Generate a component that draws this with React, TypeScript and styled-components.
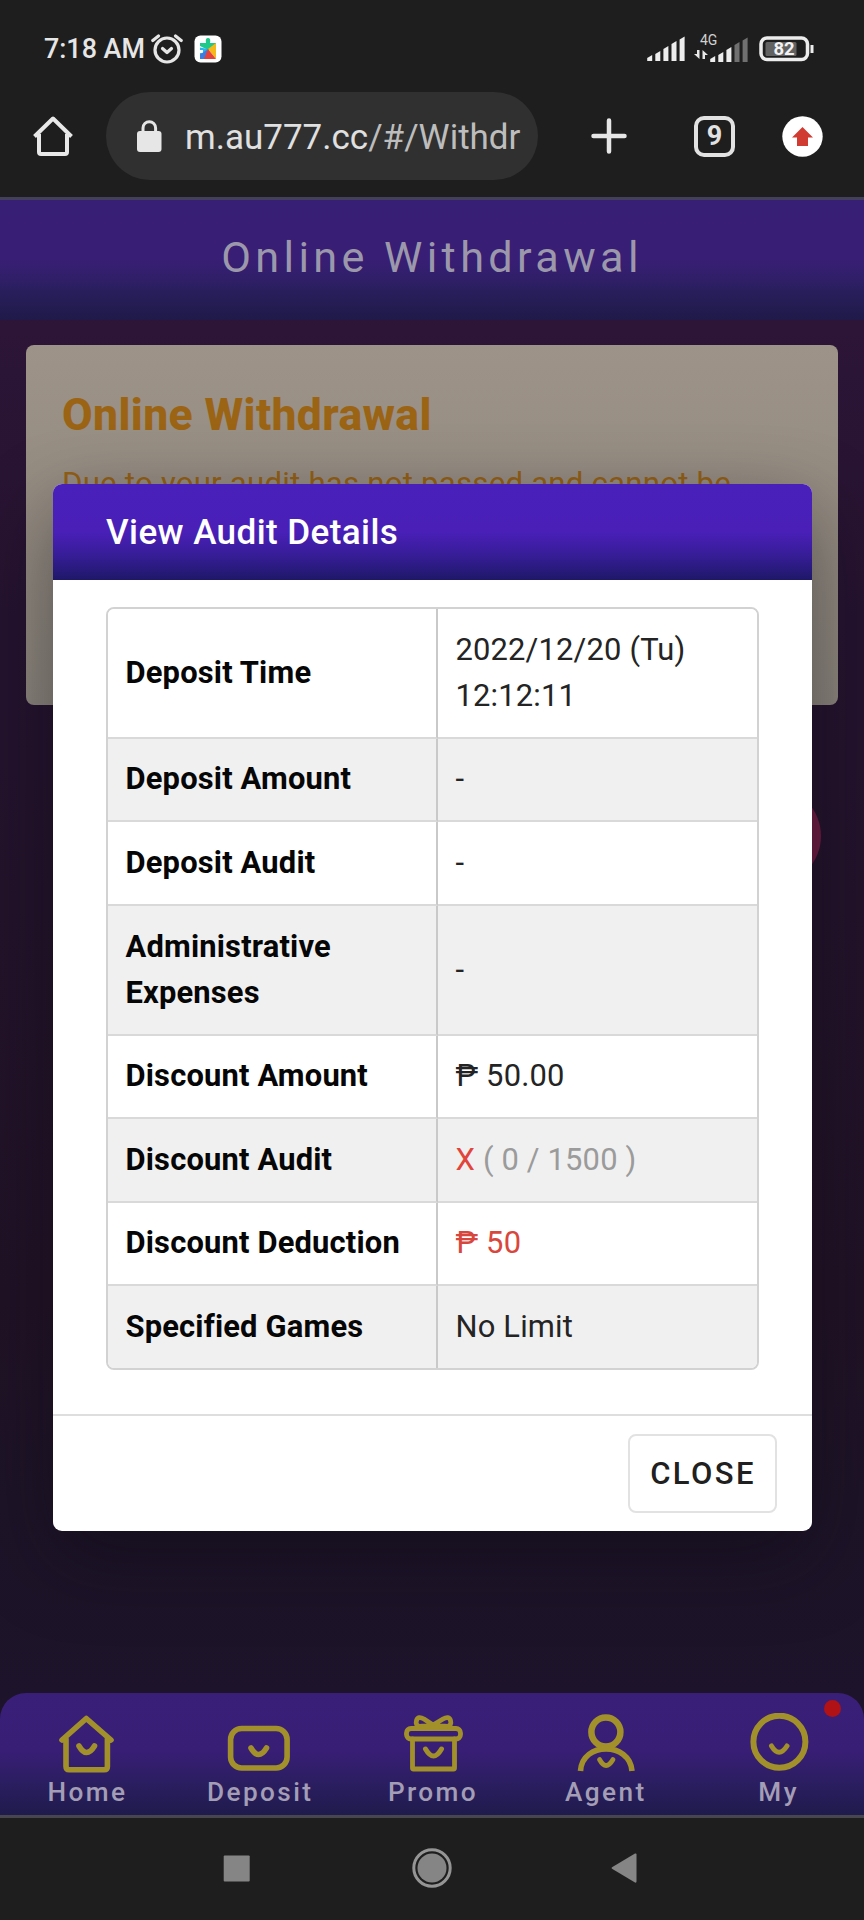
import React from "react";
import styled, { createGlobalStyle } from "styled-components";

const Global = createGlobalStyle`
  *, *::before, *::after { box-sizing: border-box; }
  html, body { margin: 0; padding: 0; background: #1e1e1e; }
  body { font-family: Roboto, "Liberation Sans", sans-serif; overflow: hidden; }
`;

const Phone = styled.div`
  position: relative;
  width: 864px;
  height: 1920px;
  display: flex;
  flex-direction: column;
  background: #1e1e1e;
  overflow: hidden;
`;

const StatusBar = styled.div`
  height: 92px;
  padding: 5px 49px 0 44px;
  display: flex;
  align-items: center;
  justify-content: space-between;
  color: #e6e6e6;
`;

const StatusGroup = styled.div<{ $gap: number }>`
  display: flex;
  align-items: center;
  gap: ${(p) => p.$gap}px;
`;

const Clock = styled.span`
  width: 100px;
  padding-top: 1px;
  font-size: 26.9px;
  line-height: 32px;
  font-weight: 500;
  white-space: nowrap;
`;

const BrowserBar = styled.div`
  height: 105px;
  padding: 0 41px 0 33px;
  display: flex;
  align-items: flex-start;
`;

const BrowserIcon = styled.div<{ $width: number; $left?: number }>`
  flex: none;
  width: ${(p) => p.$width}px;
  height: 88px;
  margin-left: ${(p) => p.$left ?? 0}px;
  display: flex;
  align-items: center;
  justify-content: center;
`;

const AddressPill = styled.div`
  flex: none;
  width: 432px;
  height: 88px;
  margin-left: 33px;
  padding: 0 12px 0 31px;
  border-radius: 44px;
  background: #303030;
  display: flex;
  align-items: center;
  gap: 23px;
`;

const Url = styled.span`
  flex: 1;
  padding-top: 3px;
  font-size: 35px;
  line-height: 48px;
  white-space: nowrap;
  color: #e0e0e0;
`;

const UrlPath = styled.span`
  color: #bdbdbd;
`;

const TabCount = styled.div`
  width: 41px;
  height: 41px;
  border: 4.5px solid #e2e2e2;
  border-radius: 10px;
  display: flex;
  align-items: center;
  justify-content: center;
  font-size: 27px;
  line-height: 30px;
  font-weight: 700;
  color: #e2e2e2;
`;

const Page = styled.main`
  height: 1621px;
  display: flex;
  flex-direction: column;
  border-top: 3px solid #43405a;
  border-bottom: 3px solid #47464e;
  background: linear-gradient(180deg, #2e163a 0, #2c1537 130px, #25132f 420px, #23132b 700px, #211226 1100px, #1e1428 1300px, #1d132a 1496px);
`;

const PageHeader = styled.header`
  height: 120px;
  display: flex;
  align-items: center;
  justify-content: center;
  padding-bottom: 4px;
  background: linear-gradient(180deg, #381f76 0%, #381e74 50%, #301f68 66%, #281e5a 78%, #1f1a49 100%);
  font-size: 43.2px;
  line-height: 52px;
  letter-spacing: 4.4px;
  color: #9c98ab;
`;

const NoticeCard = styled.section`
  height: 360px;
  margin: 25px 26px 0;
  padding: 41px 36px 0;
  border-radius: 8px;
  background: linear-gradient(180deg, #9d9389 0%, #958c82 40%, #8b857c 100%);
`;

const NoticeTitle = styled.h2`
  margin: 0;
  font-size: 44.4px;
  line-height: 59px;
  font-weight: 800;
  letter-spacing: 0.4px;
  color: #9b6414;
`;

const NoticeText = styled.p`
  margin: 16px 0 0;
  font-size: 31.2px;
  line-height: 46px;
  letter-spacing: 0.22px;
  white-space: nowrap;
  color: #936016;
`;

const SubmitPill = styled.div`
  height: 98px;
  margin: 82px 43px 0 432px;
  border-radius: 49px;
  background: #6e1b42;
`;

const TabBar = styled.nav`
  position: relative;
  height: 122px;
  margin-top: auto;
  padding-top: 20px;
  display: grid;
  grid-template-columns: repeat(5, 1fr);
  border-radius: 26px 26px 0 0;
  background: linear-gradient(180deg, #391f77 0%, #381e75 48%, #2c1e62 72%, #1f1b4c 100%);
`;

const Tab = styled.div`
  display: flex;
  flex-direction: column;
  align-items: center;
  font-size: 26.2px;
  line-height: 32px;
  font-weight: 500;
  letter-spacing: 2.4px;
  color: #a39db6;
`;

const TabLabel = styled.span`
  margin-top: 3px;
  margin-right: -2px;
`;

const TabIcon = styled.svg`
  width: 64px;
  height: 60px;
  fill: none;
  stroke: #a2912b;
  stroke-width: 5.6;
  stroke-linecap: round;
  stroke-linejoin: round;
`;

const AlertDot = styled.i`
  position: absolute;
  top: 7px;
  right: 23px;
  width: 17px;
  height: 17px;
  border-radius: 50%;
  background: #b01215;
`;

const SystemNav = styled.div`
  flex: 1;
  padding: 0 0 2px 223px;
  display: flex;
  align-items: center;
`;

const SystemGlyph = styled.svg<{ $left?: number }>`
  margin-left: ${(p) => p.$left ?? 0}px;
  fill: #858585;
`;

const DialogLayer = styled.div`
  position: absolute;
  top: 484px;
  left: 53px;
  width: 759px;
  height: 1047px;
  border-radius: 9px;
  box-shadow: 0 28px 80px rgba(12, 12, 18, 0.45);
`;

const Dialog = styled.section`
  height: 100%;
  display: flex;
  flex-direction: column;
  border-radius: 9px;
  overflow: hidden;
  background: #fff;
`;

const DialogHeader = styled.header`
  height: 96px;
  padding: 0 53px;
  display: flex;
  align-items: center;
  background: linear-gradient(180deg, #4a20bb 0%, #491fb8 50%, #371d97 74%, #1e1868 100%);
  font-size: 35.1px;
  line-height: 44px;
  font-weight: 500;
  letter-spacing: 0.4px;
  color: #fff;
`;

const DialogBody = styled.div`
  flex: 1;
  padding: 27px 53px 0;
`;

const AuditTable = styled.dl`
  width: 653px;
  height: 763px;
  margin: 0;
  display: grid;
  grid-template-columns: 330px 1fr;
  grid-template-rows: 130px 83px 84px 130px 83px 84px 83px 1fr;
  border: 2px solid #d2d2d2;
  border-radius: 8px;
  overflow: hidden;
  font-size: 30.9px;
  line-height: 46px;
  letter-spacing: 0.17px;
`;

const Cell = styled.dd<{ $shaded: boolean; $last: boolean; $tone?: string }>`
  margin: 0;
  padding: 0 17.5px 1px;
  display: flex;
  align-items: center;
  border-bottom: ${(p) => (p.$last ? "none" : "2px solid #d9d9d9")};
  background: ${(p) => (p.$shaded ? "#f0f0f0" : "#fff")};
  color: ${(p) => p.$tone ?? "#242424"};
`;

const LabelCell = styled(Cell).attrs({ as: "dt" })`
  border-right: 2px solid #c9c9c9;
  font-weight: 700;
  color: #060606;
`;

const Muted = styled.span`
  color: #9b9b9b;
`;

const DialogFooter = styled.footer`
  height: 117px;
  padding: 18px 35px 0;
  display: flex;
  justify-content: flex-end;
  border-top: 2px solid #dedede;
`;

const CloseButton = styled.button`
  width: 149px;
  height: 79px;
  padding: 1px 0 0 1px;
  border: 2px solid #e2e2e2;
  border-radius: 8px;
  background: #fff;
  font: 500 31px/40px Roboto, "Liberation Sans", sans-serif;
  letter-spacing: 2.4px;
  color: #202020;
`;

const rows: { label: string; value: React.ReactNode; tone?: string }[] = [
  { label: "Deposit Time", value: <>2022/12/20 (Tu)<br />12:12:11</> },
  { label: "Deposit Amount", value: "-" },
  { label: "Deposit Audit", value: "-" },
  { label: "Administrative Expenses", value: "-" },
  { label: "Discount Amount", value: "₱ 50.00" },
  { label: "Discount Audit", value: <span>X <Muted>( 0 / 1500 )</Muted></span>, tone: "#e0443a" },
  { label: "Discount Deduction", value: "₱ 50", tone: "#d8473d" },
  { label: "Specified Games", value: "No Limit" },
];

const tabs = [
  {
    label: "Home",
    art: <><path d="M8 27 32.3 5.5 57 27M12 26v27.5q0 3.2 3.2 3.2h35q3.2 0 3.2-3.2V26" /><path d="M25 33q7.500 13 15.500 0" /></>,
  },
  {
    label: "Deposit",
    art: <><rect x="3.600" y="15.500" width="56.500" height="39.500" rx="11" /><path d="M24 35q7.500 13 15.500 0" /></>,
  },
  {
    label: "Promo",
    art: <><g strokeWidth="4.800"><rect x="6.500" y="15.500" width="54" height="10.500" rx="4.500" /><path d="M12.500 26v29q0 1 1 1h40q1 0 1-1V26" /><path d="M33 12 24 6q-6-3.500-7.500 1.500T20 13.500zM33 12 43 6q6-3.500 7.500 1.500T47 13.500z" /></g><path d="M25.500 36q8 14 16 0" strokeWidth="5" /></>,
  },
  {
    label: "Agent",
    art: <><circle cx="32.900" cy="19" r="14.500" strokeWidth="6.500" /><path d="M7.500 58C9 28.500 57 28.500 59 58" strokeLinecap="butt" /><path d="M26.500 46.500q6.500 12 13.500 0" strokeWidth="4.800" /></>,
  },
  {
    label: "My",
    art: <><circle cx="33.400" cy="28.700" r="26" strokeWidth="6" /><path d="M25.500 33q7.500 12.500 15.500 0" strokeWidth="5" /></>,
  },
];

function Signal({ lit }: { lit: number }) {
  return (
    <svg width="38" height="25" viewBox="0 0 38 25">
      {[6, 10, 15, 20, 24.5].map((h, i) => (
        <path key={h} d={`M${i * 8.1 + 0.2} 25V${25 - h + 3}l5-3V25z`} fill={i < lit ? "#ededed" : "#707070"} />
      ))}
    </svg>
  );
}

export default function App() {
  return (
    <>
      <Global />
      <Phone>
        <StatusBar>
          <StatusGroup $gap={7}>
            <Clock>7:18 AM</Clock>
            <svg width="32" height="30" viewBox="0 0 32 30" fill="none" stroke="#e6e6e6" strokeWidth="3.200" strokeLinecap="round" strokeLinejoin="round">
              <circle cx="16" cy="16" r="12" />
              <path d="M1.800 6.500 7.500 2M30.200 6.500 24.500 2" />
              <path d="m11.500 14.500 4.500 4 4.500-4" />
            </svg>
            <svg width="32" height="28" viewBox="-4 0 32 28">
              <rect width="27" height="27" x=".5" y=".5" rx="6" fill="#fff" />
              <path d="M6 8h6q-1-5 2-5t2 5h6v6l-8 1-8-4z" fill="#1fc98a" />
              <path d="M6 12.500 14 14l-8 7v-3h3v-3H6z" fill="#28b6ee" />
              <path d="m14 14 8-6v16z" fill="#f6b91a" />
              <path d="m14 14 8 10H6z" fill="#e2413c" />
              <path d="M6 19.500 14 14l-4 10H6z" fill="#3b7de0" />
            </svg>
          </StatusGroup>
          <StatusGroup $gap={9}>
            <Signal lit={5} />
            <svg width="56" height="32" viewBox="0 0 56 32">
              <text x="6" y="12" fontSize="14" fontFamily="Roboto" fill="#d0d0d0">4G</text>
              <path d="M5.500 17v9L0 21h3v-4zM8.500 26v-9l5.500 5h-3v4z" fill="#e6e6e6" />
              <g transform="translate(16 4)"><Signal lit={3} /></g>
            </svg>
            <svg width="56" height="26" viewBox="0 0 56 26">
              <rect x="2" y="2" width="46.500" height="21.500" rx="6" fill="none" stroke="#ededed" strokeWidth="3.500" />
              <rect x="6.500" y="6" width="31" height="14" rx="1.500" fill="#626262" />
              <path d="M53 9v8" stroke="#ededed" strokeWidth="3" />
              <text x="25" y="19.300" fontSize="18.500" fontWeight="700" textAnchor="middle" fontFamily="Roboto" fill="#f2f2f2">82</text>
            </svg>
          </StatusGroup>
        </StatusBar>

        <BrowserBar>
          <BrowserIcon $width={40}>
            <svg width="40" height="40" viewBox="0 0 40 40" fill="none" stroke="#e8e8e8" strokeWidth="4" strokeLinejoin="round">
              <path d="M1.500 20.500 20 2.500l18.500 18M6 18v18q0 2 2 2h24q2 0 2-2V18" />
            </svg>
          </BrowserIcon>
          <AddressPill>
            <svg width="25" height="32" viewBox="0 0 25 32">
              <rect y="11" width="24.500" height="21" rx="3" fill="#e6e6e6" />
              <path d="M6 12V8a6.300 6.300 0 0 1 12.600 0v4" fill="none" stroke="#e6e6e6" strokeWidth="3" />
            </svg>
            <Url>m.au777.cc<UrlPath>/#/Withdr</UrlPath></Url>
          </AddressPill>
          <BrowserIcon $width={36} $left={53}>
            <svg width="36" height="36" viewBox="0 0 36 36" stroke="#e6e6e6" strokeWidth="4.500" strokeLinecap="round">
              <path d="M18 2.500v31M2.500 18h31" />
            </svg>
          </BrowserIcon>
          <BrowserIcon $width={41} $left={67}><TabCount>9</TabCount></BrowserIcon>
          <BrowserIcon $width={41} $left={47}>
            <svg width="41" height="41" viewBox="0 0 41 41">
              <circle cx="20.500" cy="20.500" r="20.200" fill="#fff" />
              <path d="m20.500 11 10.500 10.500h-5V30H15v-8.500h-5z" fill="#d03c32" />
            </svg>
          </BrowserIcon>
        </BrowserBar>

        <Page>
          <PageHeader>Online Withdrawal</PageHeader>
          <NoticeCard>
            <NoticeTitle>Online Withdrawal</NoticeTitle>
            <NoticeText>Due to your audit has not passed and cannot be</NoticeText>
          </NoticeCard>
          <SubmitPill />
          <TabBar>
            {tabs.map((t) => (
              <Tab key={t.label}>
                <TabIcon viewBox="0 0 64 60">{t.art}</TabIcon>
                <TabLabel>{t.label}</TabLabel>
              </Tab>
            ))}
            <AlertDot />
          </TabBar>
        </Page>

        <SystemNav>
          <SystemGlyph width="27" height="27" viewBox="0 0 27 27"><rect x=".7" y=".5" width="26" height="26" rx="1" /></SystemGlyph>
          <SystemGlyph width="40" height="40" viewBox="0 0 40 40" $left={162}>
            <circle cx="20" cy="20" r="18.200" fill="none" stroke="#959595" strokeWidth="3" />
            <circle cx="20" cy="20" r="14.500" />
          </SystemGlyph>
          <SystemGlyph width="26" height="30" viewBox="0 0 26 30" $left={159}><path d="M1 14.200Q0 15 1 15.800L24 29.500q1.500.500 1.500-1V1.500q0-1.500-1.500-1z" /></SystemGlyph>
        </SystemNav>

        <DialogLayer>
          <Dialog role="dialog">
            <DialogHeader>View Audit Details</DialogHeader>
            <DialogBody>
              <AuditTable>
                {rows.map((r, i) => (
                  <React.Fragment key={r.label}>
                    <LabelCell $shaded={i % 2 === 1} $last={i === rows.length - 1}>{r.label}</LabelCell>
                    <Cell $shaded={i % 2 === 1} $last={i === rows.length - 1} $tone={r.tone}><span>{r.value}</span></Cell>
                  </React.Fragment>
                ))}
              </AuditTable>
            </DialogBody>
            <DialogFooter><CloseButton>CLOSE</CloseButton></DialogFooter>
          </Dialog>
        </DialogLayer>
      </Phone>
    </>
  );
}
